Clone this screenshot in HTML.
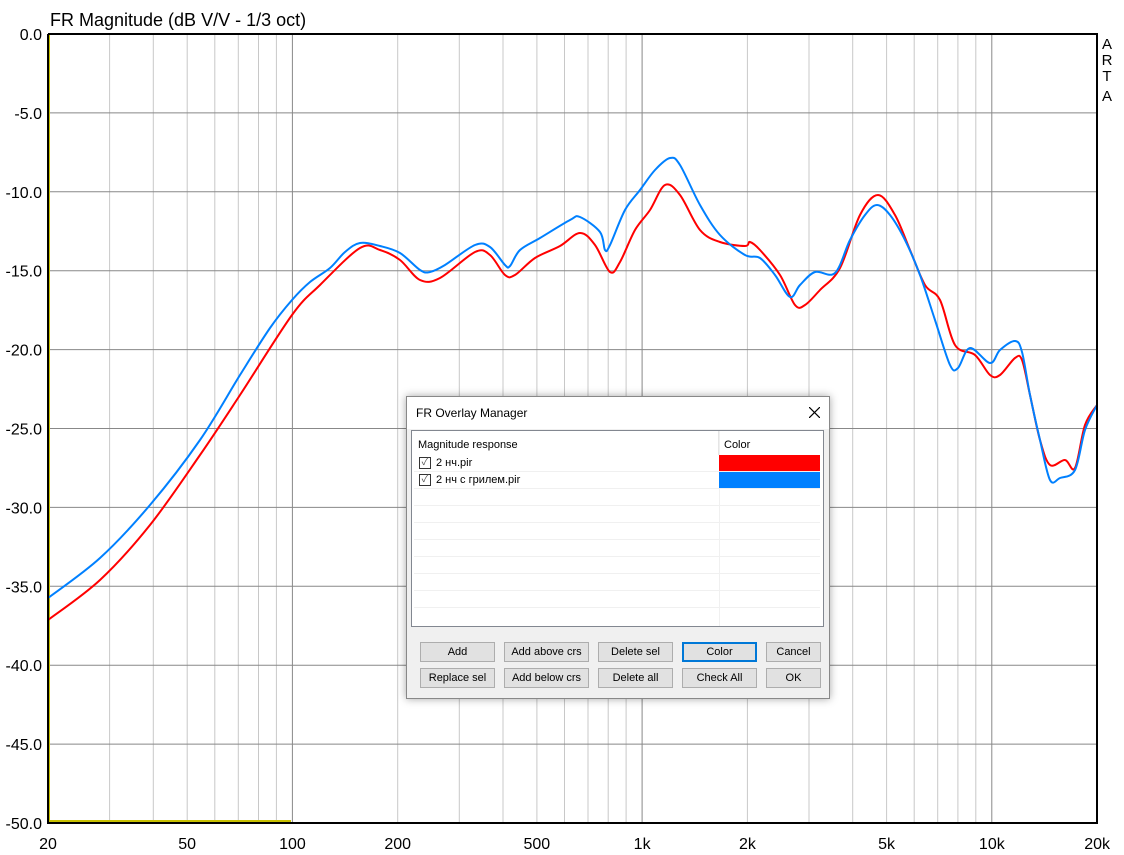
<!DOCTYPE html>
<html><head><meta charset="utf-8"><style>
body{margin:0;width:1124px;height:855px;background:#fff;overflow:hidden;font-family:"Liberation Sans","Noto Sans CJK SC",sans-serif;position:relative}
.dlg{position:absolute;left:406px;top:396px;width:422px;height:301px;background:#f0f0f0;border:1px solid #888;box-shadow:0 0 8px rgba(0,0,0,.35);font-size:11px;color:#000}
.tb{height:32px;background:#fff;position:relative}
.tb span{position:absolute;left:9px;top:9px;font-size:12px}
.list{position:absolute;left:4px;top:33px;width:411px;height:195px;background:#fff;border:1px solid #828790}
.row{position:absolute;left:2px;width:406px;height:16px;border-bottom:1px solid #f0f0f0}
.btn{position:absolute;height:18px;background:#e1e1e1;border:1px solid #adadad;text-align:center;line-height:18px;font-size:11px}
.cb{position:absolute;left:5px;top:2px;width:10px;height:10px;border:1px solid #333;font-size:10px;line-height:10px;text-align:center;color:#555}
</style></head><body>
<svg width="1124" height="855" style="position:absolute;left:0;top:0" id="s">
<g id="g"></g>
<text x="50" y="26" font-size="18" font-family="Liberation Sans">FR Magnitude (dB V/V - 1/3 oct)</text>
<g font-size="15" font-family="Liberation Sans" text-anchor="middle"><text x="1107" y="49">A</text><text x="1107" y="65">R</text><text x="1107" y="81">T</text><text x="1107" y="101">A</text></g>
<polyline fill="none" stroke="#c8c000" stroke-width="2" points="49,34 49,821 291,821"/>
<path id="r" fill="none" stroke="#ff0000" stroke-width="2" stroke-linejoin="round"/>
<path id="b" fill="none" stroke="#0080ff" stroke-width="2" stroke-linejoin="round"/>
<polyline fill="none" stroke="#000" stroke-width="2" points="48,34 1097,34 1097,823 48,823 48,34"/>
</svg>
<script>
var g=document.getElementById('g'),h='';
function X(f){return 48+349.7*Math.log10(f/20);}
var fs=[30,40,50,60,70,80,90,100,200,300,400,500,600,700,800,900,1000,2000,3000,4000,5000,6000,7000,8000,9000,10000];
fs.forEach(function(f){var x=X(f).toFixed(1);var m=(f==100||f==1000||f==10000);h+='<line x1="'+x+'" y1="34" x2="'+x+'" y2="823" stroke="'+(m?'#888':'#c8c8c8')+'"/>';});
for(var i=1;i<10;i++){var y=34+i*78.9;h+='<line x1="48" y1="'+y+'" x2="1097" y2="'+y+'" stroke="#888"/>';}
for(var i=0;i<=10;i++){var y=34+i*78.9;h+='<text x="42" y="'+(y+6)+'" font-size="16" text-anchor="end" font-family="Liberation Sans">'+(i==0?'0.0':'-'+(i*5)+'.0')+'</text>';}
[[20,'20'],[50,'50'],[100,'100'],[200,'200'],[500,'500'],[1000,'1k'],[2000,'2k'],[5000,'5k'],[10000,'10k'],[20000,'20k']].forEach(function(a){h+='<text x="'+X(a[0])+'" y="849" font-size="16" text-anchor="middle" font-family="Liberation Sans">'+a[1]+'</text>';});
g.innerHTML=h;
function sp(s){var p=s.trim().split(/\s+/).map(function(t){return t.split(',').map(Number);});var d='M'+p[0];for(var i=0;i<p.length-1;i++){var a=p[i-1]||p[i],b=p[i],c=p[i+1],e=p[i+2]||c;d+=' C'+(b[0]+(c[0]-a[0])/6)+','+(b[1]+(c[1]-a[1])/6)+' '+(c[0]-(e[0]-b[0])/6)+','+(c[1]-(e[1]-b[1])/6)+' '+c;}return d;}
document.getElementById('r').setAttribute('d',sp("48,620 100,580 150,525 200,455 240,395 292,315 320,285 360,248 380,250 400,260 420,280 440,278 475,252 490,255 505,275 515,275 535,258 560,246 580,233 595,245 610,272 620,262 635,230 650,210 665,185 680,195 700,230 720,242 745,246 750,242 760,250 780,275 795,305 805,305 820,290 840,268 860,215 878,195 895,215 910,250 925,285 940,300 955,345 975,355 990,375 1000,375 1015,358 1022,360 1030,395 1040,440 1050,465 1065,460 1075,468 1085,425 1097,405"));
document.getElementById('b').setAttribute('d',sp("48,598 100,558 150,505 200,440 240,375 270,328 292,300 310,282 330,268 345,252 360,243 380,246 400,253 420,270 430,272 445,265 475,245 490,247 505,265 510,266 520,250 540,238 570,220 580,217 600,232 605,250 610,245 625,210 640,190 655,170 670,158 680,165 700,205 720,235 745,255 760,258 775,275 790,297 800,285 815,272 835,273 850,240 865,215 877,205 890,215 905,240 920,275 935,320 950,365 958,368 970,348 990,363 1000,350 1015,341 1022,352 1030,395 1040,440 1050,480 1060,478 1075,470 1085,430 1097,405"));
</script>
<div class="dlg">
<div class="tb"><span>FR Overlay Manager</span><svg style="position:absolute;right:9px;top:10px" width="11" height="11"><path d="M0,0L11,11M11,0L0,11" stroke="#000" stroke-width="1.2"/></svg></div>
<div class="list">
<div style="position:absolute;left:6px;top:8px">Magnitude response</div>
<div style="position:absolute;left:307px;top:0;width:1px;height:195px;background:#f0f0f0"></div>
<div style="position:absolute;left:306px;top:0;width:1px;height:24px;background:#e5e5e5"></div>
<div style="position:absolute;left:312px;top:8px">Color</div>
<div class="row" style="top:24px"><div class="cb">✓</div><span style="position:absolute;left:22px;top:2px">2 нч.pir</span><div style="position:absolute;left:305px;top:0;width:101px;height:16px;background:#ff0000"></div></div>
<div class="row" style="top:41px"><div class="cb">✓</div><span style="position:absolute;left:22px;top:2px">2 нч с грилем.pir</span><div style="position:absolute;left:305px;top:0;width:101px;height:16px;background:#0080ff"></div></div>
<div class="row" style="top:58px"></div><div class="row" style="top:75px"></div><div class="row" style="top:92px"></div><div class="row" style="top:109px"></div><div class="row" style="top:126px"></div><div class="row" style="top:143px"></div><div class="row" style="top:160px"></div>
</div>
<div class="btn" style="left:13px;top:245px;width:73px">Add</div>
<div class="btn" style="left:97px;top:245px;width:83px">Add above crs</div>
<div class="btn" style="left:191px;top:245px;width:73px">Delete sel</div>
<div class="btn" style="left:275px;top:245px;width:71px;border:2px solid #0078d7;height:16px;line-height:16px">Color</div>
<div class="btn" style="left:359px;top:245px;width:53px">Cancel</div>
<div class="btn" style="left:13px;top:271px;width:73px">Replace sel</div>
<div class="btn" style="left:97px;top:271px;width:83px">Add below crs</div>
<div class="btn" style="left:191px;top:271px;width:73px">Delete all</div>
<div class="btn" style="left:275px;top:271px;width:73px">Check All</div>
<div class="btn" style="left:359px;top:271px;width:53px">OK</div>
</div>
</body></html>
